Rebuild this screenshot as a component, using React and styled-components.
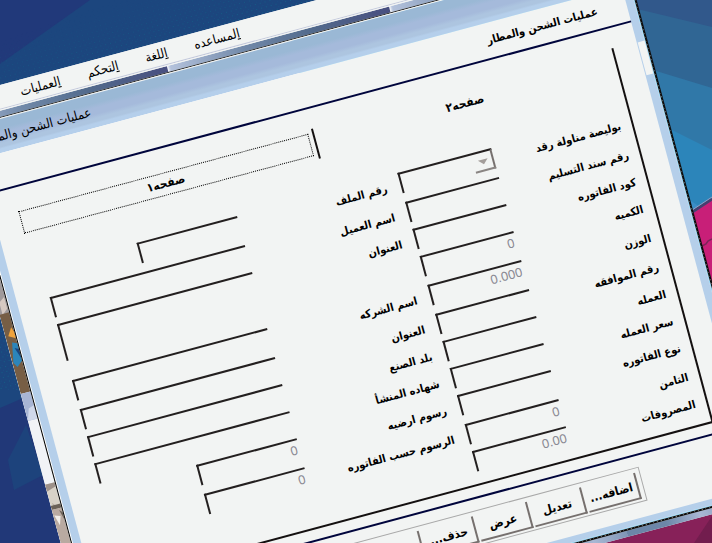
import { useState } from "react";
import styled, { createGlobalStyle } from "styled-components";

const menus = ["العمليات", "التحكم", "اللغة", "المساعده"];

const companyRows = [
    { id: "file", label: "رقم الملف", size: "short", h: 30 },
    { id: "client", label: "اسم العميل", h: 28 },
    { id: "address", label: "العنوان", size: "tall", h: 58 },
    { id: "company", label: "اسم الشركه", h: 30 },
    { id: "address2", label: "العنوان", h: 28 },
    { id: "country", label: "بلد الصنع", h: 28 },
    { id: "origin", label: "شهاده المنشأ", h: 28 },
    { id: "ground", label: "رسوم ارضيه", size: "short", value: "0", h: 30 },
    { id: "fees", label: "الرسوم حسب الفاتوره", size: "short", value: "0", h: 28 },
];

const invoiceRows = [
    { id: "waybill", label: "بوليصة مناولة رقد", select: true, h: 30 },
    { id: "receipt", label: "رقم سند التسليم", h: 28 },
    { id: "code", label: "كود الفاتوره", h: 28 },
    { id: "qty", label: "الكميه", value: "0", h: 30 },
    { id: "weight", label: "الوزن", value: "0.000", h: 30 },
    { id: "approval", label: "رقم الموافقه", h: 28 },
    { id: "currency", label: "العمله", h: 28 },
    { id: "rate", label: "سعر العمله", h: 28 },
    { id: "type", label: "نوع الفاتوره", h: 30 },
    { id: "insurance", label: "التامن", value: "0", h: 28 },
    { id: "expenses", label: "المصروفات", value: "0.00", h: 28 },
];

const actions = ["خروج", "حذف...", "عرض", "تعديل", "اضافه..."];

function FormRow({ row }) {
    const [value, setValue] = useState(row.value || "");

    return (
        <Row $h={row.h}>
            <FieldSlot $wide={row.wide}>
                {row.select ? (
                    <Combo>
                        <select id={row.id} disabled>
                            <option></option>
                        </select>
                        <ComboArrow>
                            <svg width="12" height="7" viewBox="0 0 12 7">
                                <path d="M1 1h10L6 6z" fill="#a39d9a" />
                            </svg>
                        </ComboArrow>
                    </Combo>
                ) : (
                    <Field
                        id={row.id}
                        $size={row.size}
                        value={value}
                        onChange={(e) => setValue(e.target.value)}
                    />
                )}
            </FieldSlot>
            <Label htmlFor={row.id}>{row.label}</Label>
        </Row>
    );
}

function DesktopArt() {
    return (
        <Art viewBox="0 0 712 543" preserveAspectRatio="none" aria-hidden="true">
            <defs>
                <pattern id="dots" width="5" height="5" patternUnits="userSpaceOnUse" patternTransform="rotate(-15)">
                    <rect width="1" height="1" fill="#0f7590" />
                    <rect x="2" y="3" width="1" height="1" fill="#17588a" />
                </pattern>
                <linearGradient id="fade" x1="0" y1="0" x2="1" y2="0.6">
                    <stop offset="0.2" stopColor="#fff" stopOpacity="0" />
                    <stop offset="0.8" stopColor="#fff" />
                </linearGradient>
                <mask id="dotMask">
                    <rect width="420" height="90" fill="url(#fade)" />
                    <rect y="310" width="40" height="80" fill="#888" />
                </mask>
            </defs>
            <rect width="712" height="543" fill="#1c467e" />
            <path d="M0 0H90L0 64z" fill="#21397a" />
            <rect width="712" height="543" fill="url(#dots)" mask="url(#dotMask)" />
            <path d="M0 408L30 395L80 543H0z" fill="#213878" />
            <path d="M8 460L26 425L43 475L14 490z" fill="#1d437c" />
            {/* sky on the far side */}
            <path d="M600 0H712V240H600z" fill="#31588b" />
            <path d="M600 0L712 27V260H600z" fill="#306694" />
            <path d="M620 60L712 88V300H620z" fill="#3078a8" />
            <path d="M640 114L712 150V300H640z" fill="#2c85ba" />
            <path d="M660 180L712 215V300H660z" fill="#3b8dc6" />
            <path d="M680 222L712 200V543H680z" fill="#c81f78" />
            <path d="M680 220L712 199" stroke="#46406f" strokeWidth="3" />
            <path d="M680 218L712 197" stroke="#8fa0c5" strokeWidth="1" />
            <path d="M702 246l4-2 2-3 4-2" stroke="#7c2559" strokeWidth="1.5" fill="none" />
            <path d="M540 470H712V543H540z" fill="#872159" />
            <path d="M694 543L712 516V543z" fill="#721d4e" />
        </Art>
    );
}

function EdgeArt() {
    return (
        <svg width="10" height="560" viewBox="0 0 10 560" aria-hidden="true">
            <rect width="10" height="560" fill="#f1f3f6" />
            <rect y="130" width="10" height="70" fill="#a09a9b" />
            <path d="M2 150l8-6v14l-8 6zM3 178l6-4v12l-6 5z" fill="#d6c9c1" />
            <rect y="190" width="10" height="82" fill="#775e45" />
            <path d="M3 213l5-8 2 6v6z" fill="#efa33d" />
            <path d="M1 240l4-20 5 2v18l-6 5z" fill="#2c85ba" />
            <path d="M6 226l4 2v10z" fill="#1c467e" />
            <rect y="272" width="10" height="28" fill="#a8b5d4" />
            <path d="M0 300l4-12 6-2v14z" fill="#d0d8ea" />
            <rect y="366" width="10" height="50" fill="#d8d2c7" />
            <path d="M0 366h10v4l-10 3z" fill="#9d918a" />
            <path d="M2 385l5 6-3 8z" fill="#b8afa3" />
            <path d="M0 388h10v4H0z" fill="#6b6258" />
            <rect y="392" width="10" height="168" fill="#b9aaa1" />
            <path d="M1 398l6 2-3 9z" fill="#f1eee9" />
            <path d="M7 394l3 3v8z" fill="#6b6258" />
        </svg>
    );
}

export default function App() {
    const [tab, setTab] = useState(0);

    return (
        <Desktop>
            <GlobalStyle />
            <DesktopArt />
            <AppWindow>
                <MenuBar>
                    {menus.map((m) => (
                        <MenuButton key={m} type="button">
                            <u>{m[0]}</u>{m.slice(1)}
                        </MenuButton>
                    ))}
                </MenuBar>
                <ToolStrip />
                <Workspace>
                    <EdgeArt />
                    <ChildWindow>
                        <TitleBar>عمليات الشحن والمطار</TitleBar>
                        <Client>
                            <Heading>عمليات الشحن والمطار</Heading>
                            <Panel>
                                <Tabs role="tablist">
                                    <Tab type="button" role="tab" aria-selected={tab === 0} $edge onClick={() => setTab(0)}>
                                        <span>صفحه١</span>
                                    </Tab>
                                    <Tab type="button" role="tab" aria-selected={tab === 1} onClick={() => setTab(1)}>
                                        <span>صفحه٢</span>
                                    </Tab>
                                </Tabs>
                                <Columns>
                                    <Column>
                                        {companyRows.map((row) => (
                                            <FormRow key={row.id} row={{ ...row, wide: true }} />
                                        ))}
                                    </Column>
                                    <Column>
                                        {invoiceRows.map((row) => (
                                            <FormRow key={row.id} row={row} />
                                        ))}
                                    </Column>
                                </Columns>
                            </Panel>
                            <Footer>
                                <ButtonGroup>
                                    {actions.map((a) => (
                                        <ActionButton key={a} type="button">{a}</ActionButton>
                                    ))}
                                </ButtonGroup>
                            </Footer>
                        </Client>
                    </ChildWindow>
                </Workspace>
                <BottomEdge />
            </AppWindow>
        </Desktop>
    );
}

const GlobalStyle = createGlobalStyle`
    body{
        margin: 0;
        overflow: hidden;
    }

    *{
        box-sizing: border-box;
    }

    body, button, input, select{
        font-family: "DejaVu Sans Condensed", "DejaVu Sans", sans-serif;
        font-size: 11px;
        color: #000;
    }
`

const Desktop = styled.main`
    position: relative;
    width: 100%;
    height: 100vh;
    overflow: hidden;
`

const Art = styled.svg`
    position: absolute;
    inset: 0;
    width: 100%;
    height: 100%;
`

/* the window turns around the corner of the desktop */
const AppWindow = styled.div`
    position: absolute;
    left: -82px;
    top: 82px;
    width: calc(100vw - 16px);
    transform: rotate(-15deg);
    transform-origin: 82px -82px;
    background: #f2f4f3;
`

const MenuBar = styled.nav`
    width: 150%;
    height: 24px;
    padding-left: 64px;
    display: flex;
    align-items: center;
    background: #f2f4f3;
    border-bottom: 1px solid #c3c9dc;
`

const MenuButton = styled.button`
    border: none;
    background: transparent;
    padding: 0 14px;
    direction: rtl;
    white-space: nowrap;
    font-size: 13px;
`

const ToolStrip = styled.div`
    width: 150%;
    height: 8px;
    border-top: 1px solid #f2f4f3;
    border-bottom: 1px solid #222;
    background: linear-gradient(90deg, #fff 0, #b4c2dc 3px, #7189a9 80px, #526a8c 150px, #484f80 230px) -4px 0 / 230px 100%;
`

const Workspace = styled.div`
    display: flex;
    height: 560px;

    > svg{
        flex: none;
    }
`

const ChildWindow = styled.section`
    flex: 1;
    min-width: 0;
    display: flex;
    flex-direction: column;
    padding: 0 1px 1px;
    border: 1px solid #000;
    border-top-color: #f2f4f3;
    box-shadow: 1px 1px #111;
    background: linear-gradient(90deg, #fff 50%, #8fd6f6 50%);
`

const TitleBar = styled.header`
    width: 150%;
    height: 33px;
    flex: none;
    padding: 0 0 0 14px;
    display: flex;
    align-items: center;
    font-size: 13px;
    background: linear-gradient(#9ab8d5 0 9px, #a5badb 14px 20px, #adc5e0 24px 27px, #b5cfeb 29px);
`

const Client = styled.div`
    position: relative;
    flex: 1;
    display: flex;
    flex-direction: column;
    border: solid #b5cfea;
    border-width: 0 8px 6px 8px;
    background: #f2f4f3;

    /* light break in the window frame */
    &::after{
        content: '';
        position: absolute;
        top: 58px;
        right: -8px;
        width: 7px;
        height: 34px;
        background: #f2f4f3;
    }
`

const Heading = styled.h1`
    margin: 0;
    height: 37px;
    flex: none;
    padding-right: 30px;
    display: flex;
    align-items: center;
    direction: rtl;
    font-size: 11px;
    font-weight: bold;
    border-bottom: 2px solid #00053c;
`

const Panel = styled.div`
    flex: 1;
    margin: 20px 24px 10px 21px;
    border-right: 2px solid #141010;
    border-bottom: 2px solid #141010;
`

const Tabs = styled.div`
    display: flex;
    height: 31px;
`

const Tab = styled.button`
    flex: 1;
    display: flex;
    padding: 4px;
    border: none;
    border-right: 2px solid ${({ $edge }) => ($edge ? "#141010" : "transparent")};
    background: transparent;
    font-size: 12px;
    font-weight: bold;

    span{
        flex: 1;
        height: 23px;
        line-height: 20px;
        direction: rtl;
        border: 1px dotted transparent;
    }

    &[aria-selected="true"] span{
        border-color: #000;
    }
`

const Columns = styled.div`
    display: grid;
    grid-template-columns: 354fr 228fr;
    column-gap: 14px;
    padding: 34px 11px 0 12px;
`

const Column = styled.div`
    display: flex;
    flex-direction: column;
`

const Row = styled.div`
    display: flex;
    height: ${({ $h }) => $h}px;
`

const FieldSlot = styled.div`
    flex: none;
    display: flex;
    justify-content: flex-end;
    width: ${({ $wide }) => ($wide ? 202 : 97)}px;
`

const Field = styled.input`
    width: ${({ $size }) => ($size === "short" ? "104px" : "100%")};
    height: ${({ $size }) => ($size === "tall" ? 38 : 21)}px;
    padding: 0 2px 0 0;
    border: 0 solid #231f1f;
    border-width: 2px 0 0 2px;
    background: transparent;
    outline: none;
    text-align: right;
    font-family: "Liberation Sans", sans-serif;
    font-size: 13px;
    color: #8a8a94;
`

const Combo = styled.div`
    position: relative;
    width: 100%;
    height: 21px;

    select{
        appearance: none;
        width: 100%;
        height: 100%;
        border: solid #231f1f;
        border-width: 2px 2px 0 2px;
        border-right-color: #76706e;
        border-radius: 0;
        background: transparent;
        opacity: 1;
    }
`

const ComboArrow = styled.span`
    position: absolute;
    right: 0;
    bottom: 0;
    width: 21px;
    height: 18px;
    display: flex;
    align-items: center;
    padding-left: 4px;
    border-bottom: 2px solid #8a8583;
    pointer-events: none;
`

const Label = styled.label`
    flex: 1;
    direction: rtl;
    line-height: 26px;
    font-size: 11px;
    font-weight: bold;
    white-space: nowrap;
`

const Footer = styled.footer`
    height: 63px;
    flex: none;
    display: flex;
    justify-content: flex-end;
    align-items: flex-start;
    padding: 11px 108px 0 0;
    border-top: 2px solid #00053c;
`

const ButtonGroup = styled.div`
    display: flex;
    gap: 2px;
    padding: 4px 4px 2px 200px;
    border: 1px solid #a9a9a9;
`

const ActionButton = styled.button`
    width: 54px;
    height: 27px;
    padding: 0;
    border: 0 solid #76706e;
    border-width: 0 2px 2px 0;
    background: transparent;
    direction: rtl;
    font-size: 12px;
    font-weight: bold;
`

const BottomEdge = styled.div`
    height: 6px;
    margin-top: 1px;
    background: repeating-linear-gradient(90deg, #6c86a8 0 40px, #a9b8d4 75px, #7f96b6 110px);
`
